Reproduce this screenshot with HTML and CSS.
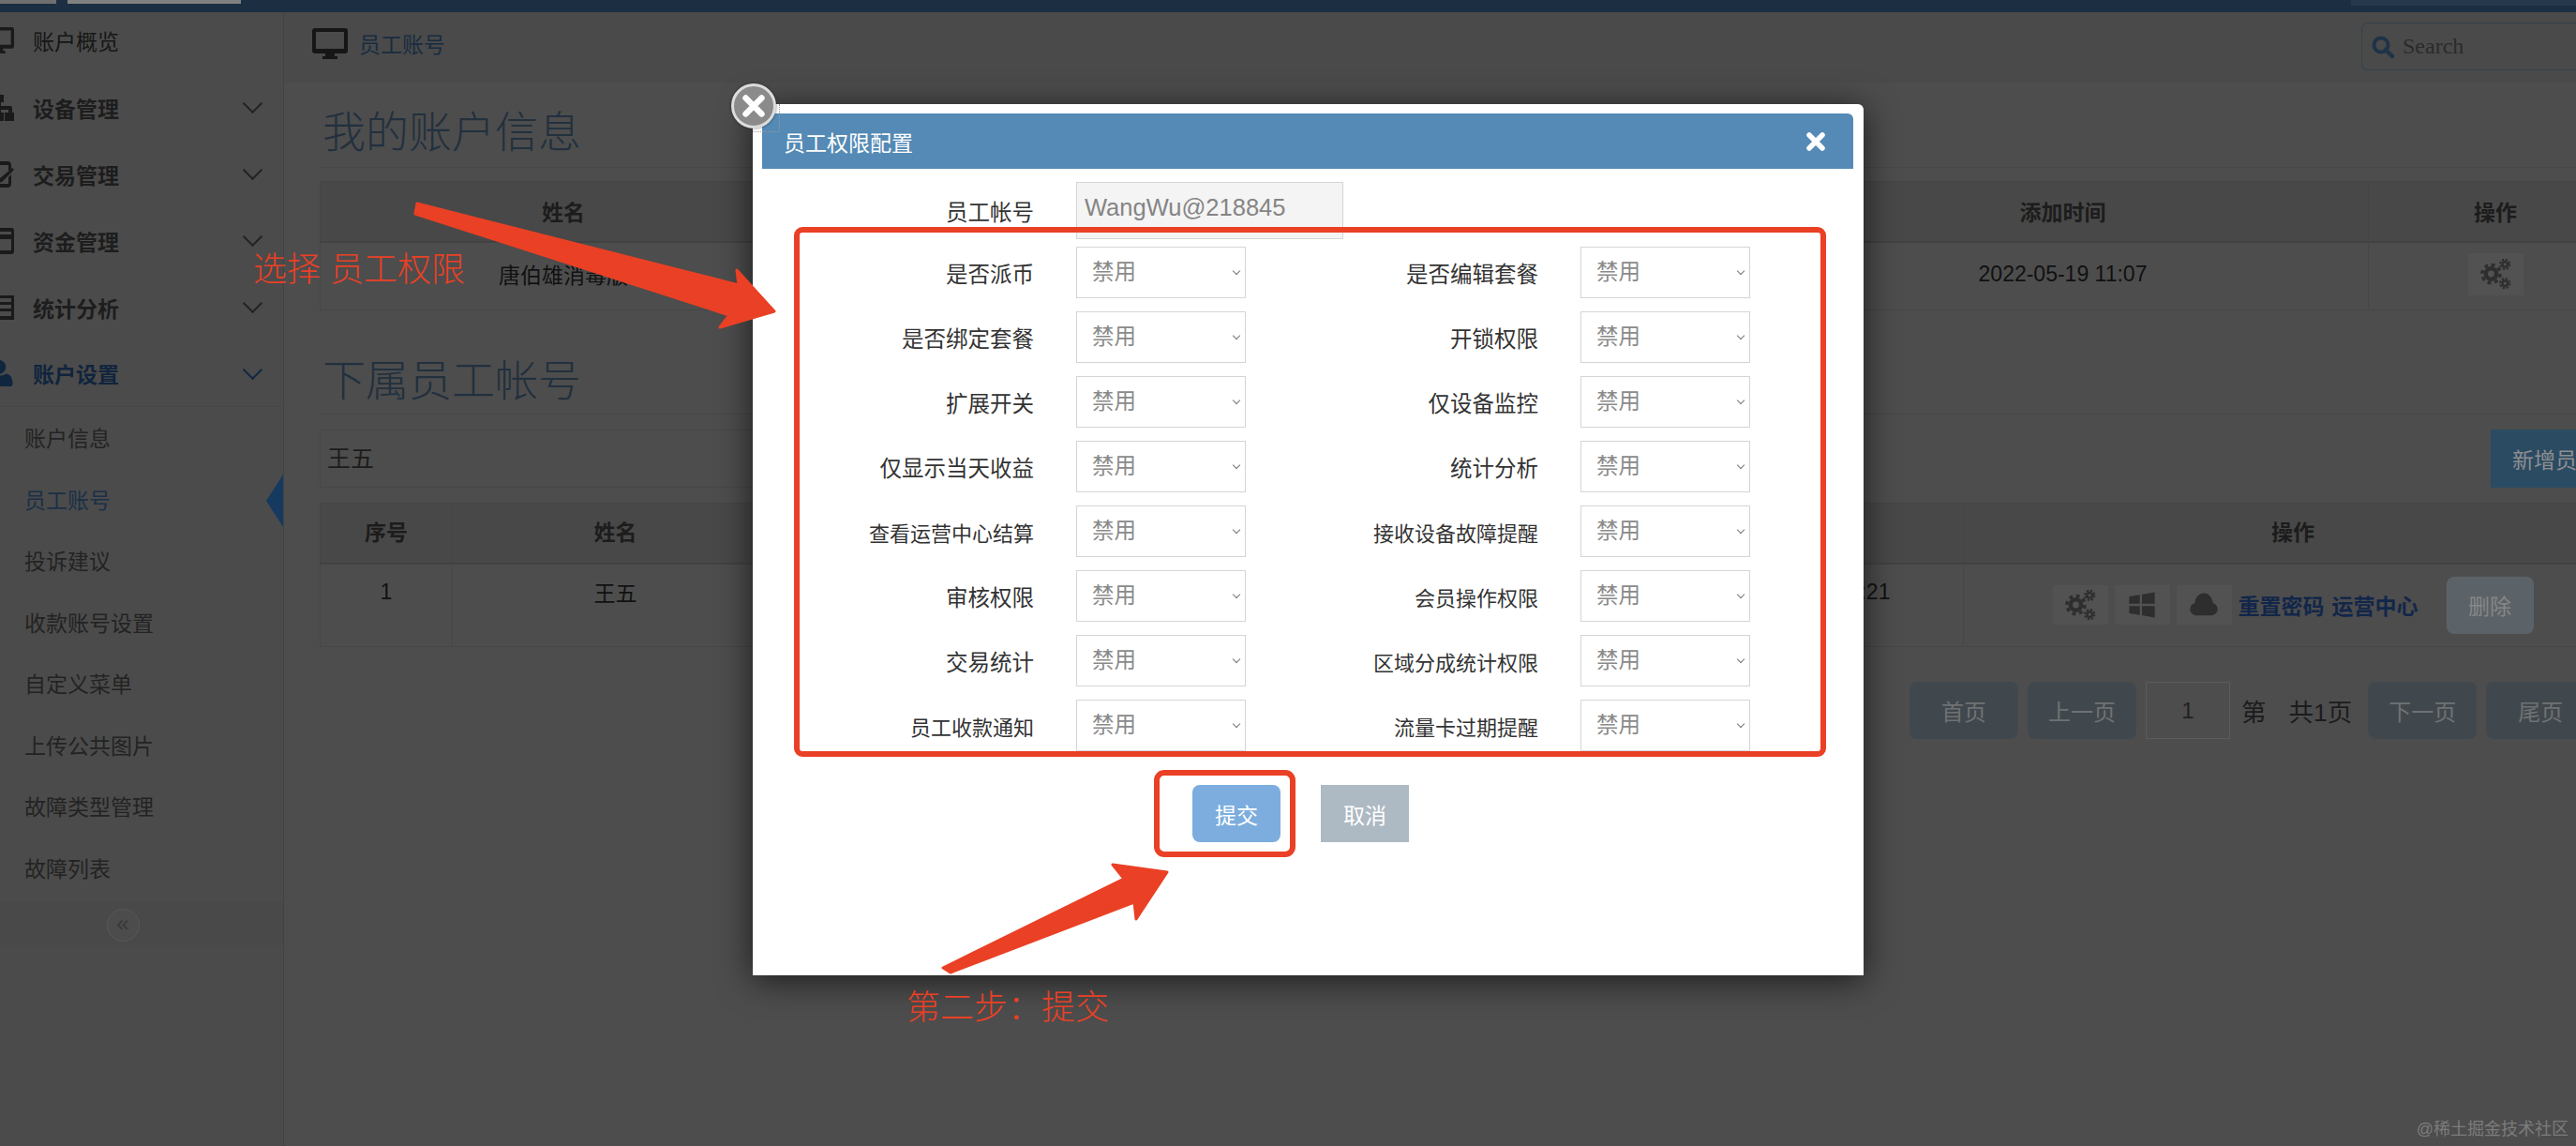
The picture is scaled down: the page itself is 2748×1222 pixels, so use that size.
FILE: index.html
```html
<!DOCTYPE html>
<html>
<head>
    <meta charset="utf-8">
    <title>员工账号</title>
    <link rel="stylesheet" href="styles.css">
</head>
<body>
    <svg class="defs" width="0" height="0">
        <symbol id="i-desktop" viewBox="0 0 38 33">
            <path fill-rule="evenodd" d="M3 0h32a3 3 0 0 1 3 3v21a3 3 0 0 1-3 3H24v3h3v3H11v-3h3v-3H3a3 3 0 0 1-3-3V3a3 3 0 0 1 3-3zm1 4v18h30V4z"/>
        </symbol>
        <symbol id="i-cogs" viewBox="0 0 30 30">
            <circle cx="11" cy="15" r="5" fill="none" stroke="currentColor" stroke-width="4"/>
            <circle cx="11" cy="15" r="8.5" fill="none" stroke="currentColor" stroke-width="3" stroke-dasharray="3.4 3.27"/>
            <circle cx="24" cy="6" r="2.4" fill="none" stroke="currentColor" stroke-width="2"/>
            <circle cx="24" cy="6" r="4.4" fill="none" stroke="currentColor" stroke-width="2" stroke-dasharray="2 1.45"/>
            <circle cx="24" cy="24" r="2.4" fill="none" stroke="currentColor" stroke-width="2"/>
            <circle cx="24" cy="24" r="4.4" fill="none" stroke="currentColor" stroke-width="2" stroke-dasharray="2 1.45"/>
        </symbol>
    </svg>

    <div class="topbar">
        <span class="top-chip chip-a"></span>
        <span class="top-chip chip-b"></span>
        <span class="top-chip chip-c"></span>
    </div>

    <div class="layout">
        <aside class="sidebar">
            <ul class="nav">
                <li class="nav-item first">
                    <svg class="nav-icon"><use href="#i-desktop"/></svg>账户概览
                </li>
                <li class="nav-item has-sub">
                    <svg class="nav-icon" viewBox="0 0 32 28"><path d="M11 0h10v8h-3v4h10a2 2 0 0 1 2 2v5h2v9h-10v-9h4v-3H18v3h3v9H11v-9h3v-3H6v3h4v9H0v-9h2v-5a2 2 0 0 1 2-2h10V8h-3z"/></svg>设备管理
                </li>
                <li class="nav-item has-sub">
                    <svg class="nav-icon" viewBox="0 0 32 28"><path fill-rule="evenodd" d="M5 0h20a4 4 0 0 1 4 4v4l-3 3V4H6v20h20v-7l3-3v10a4 4 0 0 1-4 4H5a4 4 0 0 1-4-4V4a4 4 0 0 1 4-4zm25 7 2 2-13 13-4 1 1-4z"/></svg>交易管理
                </li>
                <li class="nav-item has-sub">
                    <svg class="nav-icon" viewBox="0 0 32 28"><path fill-rule="evenodd" d="M3 0h26a3 3 0 0 1 3 3v22a3 3 0 0 1-3 3H3a3 3 0 0 1-3-3V3a3 3 0 0 1 3-3zm0 4v3h26V4zm0 8v12h26V12z"/></svg>资金管理
                </li>
                <li class="nav-item has-sub">
                    <svg class="nav-icon" viewBox="0 0 32 26"><path fill-rule="evenodd" d="M0 0h32v26H0zm3 3v4h5V3zm8 0v4h18V3zM3 10v4h5v-4zm8 0v4h18v-4zM3 17v5h5v-5zm8 0v5h18v-5z"/></svg>统计分析
                </li>
                <li class="nav-item has-sub active">
                    <svg class="nav-icon" viewBox="0 0 28 27"><circle cx="14" cy="7" r="7"/><path d="M3 27a3 3 0 0 1-3-3c0-6 3-10 7-10 2 1.500 4 2 7 2s5-.5 7-2c4 0 7 4 7 10a3 3 0 0 1-3 3z"/></svg>账户设置
                </li>
            </ul>
            <ul class="submenu">
                <li>账户信息</li>
                <li class="current">员工账号</li>
                <li>投诉建议</li>
                <li>收款账号设置</li>
                <li>自定义菜单</li>
                <li>上传公共图片</li>
                <li>故障类型管理</li>
                <li>故障列表</li>
            </ul>
            <div class="collapse-bar"><span class="collapse-btn">«</span></div>
        </aside>

        <main class="main">
            <div class="crumbs">
                <svg class="crumb-icon"><use href="#i-desktop"/></svg>
                <span class="crumb-text">员工账号</span>
                <div class="search">
                    <svg class="search-icon" viewBox="0 0 24 24"><circle cx="10" cy="10" r="7.500" fill="none" stroke="currentColor" stroke-width="4"/><path d="M15 15l7 7" stroke="currentColor" stroke-width="4.500" stroke-linecap="round"/></svg>
                    <span>Search</span>
                </div>
            </div>

            <div class="content">
                <h1 class="page-title">我的账户信息</h1>
                <table class="grid">
                    <colgroup><col class="c-a"><col class="c-b"><col class="c-c"><col class="c-d"></colgroup>
                    <thead>
                        <tr><th>姓名</th><th></th><th>添加时间</th><th>操作</th></tr>
                    </thead>
                    <tbody>
                        <tr class="row-a">
                            <td>唐伯雄消毒版</td>
                            <td></td>
                            <td>2022-05-19 11:07</td>
                            <td><span class="icon-btn tall"><svg class="btn-svg"><use href="#i-cogs"/></svg></span></td>
                        </tr>
                    </tbody>
                </table>

                <h1 class="page-title second">下属员工帐号</h1>
                <div class="toolbar">
                    <div class="search-name">王五</div>
                    <button class="add-btn">新增员工</button>
                </div>
                <table class="grid grid-staff">
                    <colgroup><col class="s-a"><col class="s-b"><col class="s-c"><col class="s-d"><col class="s-e"></colgroup>
                    <thead>
                        <tr><th>序号</th><th>姓名</th><th></th><th></th><th>操作</th></tr>
                    </thead>
                    <tbody>
                        <tr class="row-b">
                            <td>1</td>
                            <td>王五</td>
                            <td></td>
                            <td>2022-05-19 11:21</td>
                            <td class="action-cell">
                                <div class="actions">
                                    <span class="icon-btn"><svg class="btn-svg"><use href="#i-cogs"/></svg></span>
                                    <span class="icon-btn">
                                        <svg class="btn-svg" viewBox="0 0 30 30"><path d="M3 7l10-1.500V14H3zM15 5.200 27 3v11H15zM3 16h10v8.500L3 23zM15 16h12v11l-12-2.200z"/></svg>
                                    </span>
                                    <span class="icon-btn">
                                        <svg class="btn-svg" viewBox="0 0 30 30"><path d="M8 25a6 6 0 0 1-1.500-11.800C7 8 10.500 4 15 4s8 4 8.500 9.200A6 6 0 0 1 22 25z"/></svg>
                                    </span>
                                    <a class="link first-link">重置密码</a>
                                    <a class="link">运营中心</a>
                                    <button class="del-btn">删除</button>
                                </div>
                            </td>
                        </tr>
                    </tbody>
                </table>

                <div class="pager">
                    <button class="page-btn">首页</button>
                    <button class="page-btn">上一页</button>
                    <div class="page-input">1</div>
                    <span class="page-label">第</span>
                    <span class="page-label total">共1页</span>
                    <button class="page-btn">下一页</button>
                    <button class="page-btn">尾页</button>
                </div>
            </div>
        </main>
    </div>

    <!-- dialog -->
    <div class="modal">
        <div class="modal-head">
            <span>员工权限配置</span>
            <svg class="head-close" viewBox="0 0 20 20"><path d="M3 3l14 14M17 3L3 17" stroke="#fff" stroke-width="5.500" stroke-linecap="round"/></svg>
        </div>
        <div class="account-row">
            <label class="field-label">员工帐号</label>
            <div class="account-input">WangWu@218845</div>
        </div>
        <div class="perm-grid">
            <label class="field-label">是否派币</label><div class="pick">禁用</div>
            <label class="field-label">是否编辑套餐</label><div class="pick">禁用</div>
            <label class="field-label">是否绑定套餐</label><div class="pick">禁用</div>
            <label class="field-label">开锁权限</label><div class="pick">禁用</div>
            <label class="field-label">扩展开关</label><div class="pick">禁用</div>
            <label class="field-label">仅设备监控</label><div class="pick">禁用</div>
            <label class="field-label">仅显示当天收益</label><div class="pick">禁用</div>
            <label class="field-label">统计分析</label><div class="pick">禁用</div>
            <label class="field-label tight">查看运营中心结算</label><div class="pick">禁用</div>
            <label class="field-label tight">接收设备故障提醒</label><div class="pick">禁用</div>
            <label class="field-label">审核权限</label><div class="pick">禁用</div>
            <label class="field-label tight">会员操作权限</label><div class="pick">禁用</div>
            <label class="field-label">交易统计</label><div class="pick">禁用</div>
            <label class="field-label tight">区域分成统计权限</label><div class="pick">禁用</div>
            <label class="field-label tight">员工收款通知</label><div class="pick">禁用</div>
            <label class="field-label tight">流量卡过期提醒</label><div class="pick">禁用</div>
        </div>
        <div class="modal-actions">
            <button class="btn-submit">提交</button>
            <button class="btn-cancel">取消</button>
        </div>
    </div>
    <div class="focus-corner"></div>
    <div class="modal-x">
        <svg viewBox="0 0 24 24"><path d="M6 6l12 12M18 6L6 18" stroke="#fff" stroke-width="4.500" stroke-linecap="round"/></svg>
    </div>

    <!-- red notes drawn on top of the screenshot -->
    <div class="mark mark-perms"></div>
    <div class="mark mark-submit"></div>
    <svg class="arrows" width="2748" height="1222">
        <polygon points="445,217 788,304 786,288 826,332 768,349 778,336 443,228"/>
        <polygon points="1006,1032 1199,937 1187,922 1245,930 1212,980 1210,962 1014,1037"/>
    </svg>
    <div class="note note-one">选择 员工权限</div>
    <div class="note note-two">第二步：提交</div>
    <div class="watermark">@稀土掘金技术社区</div>
</body>
</html>
```

FILE: styles.css
```css
* {
    box-sizing: border-box;
}

html, body {
    margin: 0;
    width: 2748px;
    height: 1222px;
    overflow: hidden;
}

body {
    position: relative;
    background-color: #4c4c4c;
    color: #111;
    font-family: "Liberation Sans", "Noto Sans CJK SC", sans-serif;
    font-size: 23px;
}

ul {
    margin: 0;
    padding: 0;
    list-style: none;
}

button {
    font-family: inherit;
    border: none;
    padding: 0;
}

.defs {
    position: absolute;
}

/* top bar */
.topbar {
    display: flex;
    height: 13px;
    background-color: #1c2f42;
}

.top-chip {
    height: 4px;
}

.chip-a {
    width: 60px;
    background-color: #6f6f6f;
}

.chip-b {
    width: 185px;
    margin-left: 12px;
    background-color: #808080;
}

.chip-c {
    height: 6px;
    margin-left: auto;
    width: 240px;
    background-color: #26394c;
}

.layout {
    display: flex;
    height: 1209px;
}

/* sidebar */
.sidebar {
    flex: none;
    width: 303px;
    background-color: #4b4b4b;
    border-right: 1px solid #424242;
}

.nav-item {
    display: flex;
    align-items: center;
    height: 71px;
    padding-right: 25px;
    color: #1d1d1d;
    font-weight: bold;
}

.nav-item.first {
    height: 66px;
    padding-bottom: 6px;
    font-weight: normal;
    color: #161616;
}

.nav-icon {
    flex: none;
    width: 32px;
    height: 28px;
    margin-left: -17px;
    margin-right: 20px;
    fill: #1a1a1a;
}

.has-sub::after {
    content: "";
    width: 13px;
    height: 13px;
    margin-left: auto;
    margin-top: -8px;
    border-right: 2px solid #222;
    border-bottom: 2px solid #222;
    transform: rotate(45deg);
}

.nav-item.active {
    color: #10243d;
    border-bottom: 1px solid #474747;
}

.nav-item.active .nav-icon {
    fill: #10263f;
}

.active.has-sub::after {
    border-color: #10263f;
}

.submenu {
    padding-top: 2px;
}

.submenu li {
    height: 65.5px;
    line-height: 65px;
    padding-left: 26px;
    color: #232323;
}

.submenu li.current {
    position: relative;
    color: #1a3047;
}

.submenu li.current::after {
    content: "";
    position: absolute;
    right: 0;
    top: 4px;
    border-style: solid;
    border-width: 28px 18px 28px 0;
    border-color: transparent #16395f transparent transparent;
}

.collapse-bar {
    display: flex;
    justify-content: center;
    align-items: center;
    height: 48px;
    margin-top: 2px;
    background-color: #494949;
    border-top: 1px solid #474747;
}

.collapse-btn {
    width: 35px;
    height: 35px;
    margin-left: -40px;
    line-height: 29px;
    text-align: center;
    font-size: 24px;
    color: #383838;
    background-color: #4c4c4c;
    border: 1px solid #585858;
    border-radius: 50%;
}

/* main */
.main {
    flex: 1;
    min-width: 0;
    overflow: hidden;
    background-color: #4d4d4d;
}

.crumbs {
    display: flex;
    align-items: center;
    height: 75px;
    padding-left: 30px;
    background-color: #4a4a4a;
}

.crumb-icon {
    width: 38px;
    height: 33px;
    margin-top: -8px;
    margin-right: 12px;
    fill: #161616;
}

.crumb-text {
    margin-top: -10px;
    color: #182c40;
}

.search {
    display: flex;
    align-items: center;
    gap: 9px;
    width: 229px;
    height: 51px;
    margin-left: auto;
    margin-top: -2px;
    padding-left: 10px;
    color: #2b2b2b;
    font-family: "Liberation Serif", serif;
    font-size: 24px;
    border: 1px solid #33414d;
    border-right: none;
    border-radius: 7px 0 0 7px;
}

.search-icon {
    width: 24px;
    height: 24px;
    color: #1f3348;
}

.content {
    padding: 21px 0 0 38px;
}

.page-title {
    height: 70px;
    margin: 0 0 14px;
    padding: 2px 0 0 3px;
    font-size: 46px;
    font-weight: 300;
    line-height: 60px;
    color: #22303e;
    border-bottom: 1px solid #474747;
}

.page-title.second {
    height: 67px;
    margin-top: 44px;
    margin-bottom: 16px;
    padding-top: 1px;
}

/* tables */
.grid {
    width: 2456px;
    table-layout: fixed;
    border-collapse: collapse;
    text-align: center;
}

.grid th {
    height: 64px;
    font-weight: bold;
    color: #1c1c1c;
    background-color: #484848;
    border: 1px solid #454545;
    border-bottom: 2px solid #424242;
}

.grid-staff th {
    padding-bottom: 6px;
}

.grid td {
    padding: 0;
    border: 1px solid #464646;
}

.row-a td {
    height: 73px;
    padding-bottom: 4px;
}

.row-b td {
    height: 89px;
    padding-bottom: 28px;
}

.row-b td.action-cell {
    padding-bottom: 0;
}

.c-a { width: 519px; }
.c-b { width: 1014px; }
.c-c { width: 652px; }
.c-d { width: 271px; }

.s-a { width: 141px; }
.s-b { width: 348px; }
.s-c { width: 928px; }
.s-d { width: 336px; }
.s-e { width: 703px; }

.toolbar {
    display: flex;
    height: 62px;
    margin-bottom: 16px;
}

.search-name {
    flex: none;
    width: 600px;
    padding-left: 7px;
    font-size: 25px;
    line-height: 60px;
    color: #1c1c1c;
    border: 1px solid #464646;
}

.add-btn {
    flex: none;
    width: 160px;
    margin-left: 1716px;
    padding-left: 23px;
    text-align: left;
    font-size: 23px;
    color: #8f8f8f;
    background-color: #2b4b63;
}

.icon-btn {
    display: inline-flex;
    align-items: center;
    justify-content: center;
    width: 59px;
    height: 42px;
    color: #2e2e2e;
    background-color: #525252;
}

.icon-btn.tall {
    height: 45px;
    vertical-align: middle;
}

.btn-svg {
    width: 34px;
    height: 34px;
    fill: #2e2e2e;
}

.actions {
    display: flex;
    align-items: center;
    justify-content: center;
    gap: 7px;
}

.link {
    color: #12264a;
    font-weight: bold;
}

.link.first-link {
    margin-right: 1px;
}

.del-btn {
    width: 93px;
    height: 61px;
    margin-left: 23px;
    font-size: 23px;
    color: #878787;
    background-color: #5c6368;
    border-radius: 8px;
}

/* pager */
.pager {
    display: flex;
    align-items: center;
    height: 61px;
    margin-top: 37px;
    margin-left: 1696px;
    white-space: nowrap;
    color: #1c1c1c;
}

.page-btn {
    flex: none;
    width: 116px;
    height: 61px;
    margin-right: 10px;
    font-size: 24px;
    color: #6f7274;
    background-color: #41484d;
    border-radius: 8px;
}

.page-input {
    flex: none;
    width: 90px;
    height: 61px;
    line-height: 59px;
    text-align: center;
    font-size: 24px;
    color: #222;
    border: 1px solid #5c5c5c;
}

.page-label {
    flex: none;
    margin-left: 12px;
    font-size: 26.5px;
}

.page-label.total {
    margin-left: 24px;
    margin-right: 17px;
}

/* dialog */
.modal {
    position: absolute;
    left: 803px;
    top: 111px;
    width: 1185px;
    height: 929px;
    padding: 10px 11px 0 10px;
    color: #333;
    background-color: #fff;
    border-radius: 6px 6px 0 0;
    box-shadow: 0 5px 36px rgba(0, 0, 0, 0.65);
}

.modal-head {
    display: flex;
    align-items: center;
    justify-content: space-between;
    height: 59px;
    padding: 0 30px 0 23px;
    color: #fff;
    background-color: #548ab5;
    border-radius: 0 6px 0 0;
}

.head-close {
    width: 20px;
    height: 20px;
}

.account-row {
    display: flex;
    align-items: center;
    gap: 45px;
    margin-top: 14px;
}

.field-label {
    text-align: right;
    white-space: nowrap;
    font-size: 23.5px;
}

.field-label.tight {
    font-size: 22px;
}

.account-row .field-label {
    width: 290px;
}

.account-input {
    width: 285px;
    height: 61px;
    padding: 12px 0 0 8px;
    font-size: 25.5px;
    color: #858585;
    background-color: #f4f4f4;
    border: 1px solid #d5d5d5;
}

.perm-grid {
    display: grid;
    grid-template-columns: 290px 181px 267px 181px;
    grid-auto-rows: 55px;
    column-gap: 45px;
    row-gap: 14px;
    align-items: center;
    margin-top: 8px;
}

.pick {
    position: relative;
    height: 55px;
    padding-left: 16px;
    font-size: 23.5px;
    line-height: 53px;
    color: #8a8a8a;
    background-color: #fff;
    border: 1px solid #d5d5d5;
}

.pick::after {
    content: "";
    position: absolute;
    right: 6px;
    top: 22px;
    width: 5px;
    height: 5px;
    border-right: 1px solid #777;
    border-bottom: 1px solid #777;
    transform: rotate(45deg);
}

.modal-actions {
    display: flex;
    gap: 43px;
    margin-top: 36px;
    margin-left: 459px;
}

.btn-submit,
.btn-cancel {
    width: 94px;
    height: 61px;
    font-size: 23px;
    color: #fff;
}

.btn-submit {
    background-color: #7cadde;
    border-radius: 8px;
}

.btn-cancel {
    background-color: #adb9c3;
}

.focus-corner {
    position: absolute;
    left: 803px;
    top: 111px;
    width: 29px;
    height: 30px;
    border-right: 1px dotted #999;
    border-bottom: 1px dotted #999;
}

.modal-x {
    position: absolute;
    left: 780px;
    top: 89px;
    width: 48px;
    height: 48px;
    padding: 4px;
    background-color: #8b8b8b;
    border: 3px solid #dcdcdc;
    border-radius: 50%;
    box-shadow: 0 0 3px rgba(0, 0, 0, 0.5);
}

.modal-x svg {
    display: block;
    width: 100%;
    height: 100%;
}

/* annotations */
.mark {
    position: absolute;
    border: 6px solid #ea4025;
}

.mark-perms {
    left: 847px;
    top: 242px;
    width: 1101px;
    height: 565px;
    border-radius: 9px;
}

.mark-submit {
    left: 1231px;
    top: 821px;
    width: 151px;
    height: 93px;
    border-radius: 11px;
}

.arrows {
    position: absolute;
    left: 0;
    top: 0;
}

.arrows polygon {
    fill: #ea4025;
    stroke: #ea4025;
    stroke-width: 3;
    stroke-linejoin: round;
}

.note {
    position: absolute;
    font-size: 36px;
    line-height: 48px;
    font-weight: 300;
    color: #ea4025;
    white-space: nowrap;
}

.note-one {
    left: 270px;
    top: 264px;
}

.note-two {
    left: 967px;
    top: 1051px;
}

.watermark {
    position: absolute;
    right: 8px;
    bottom: 7px;
    font-size: 18px;
    color: #7c7c7c;
}
```
